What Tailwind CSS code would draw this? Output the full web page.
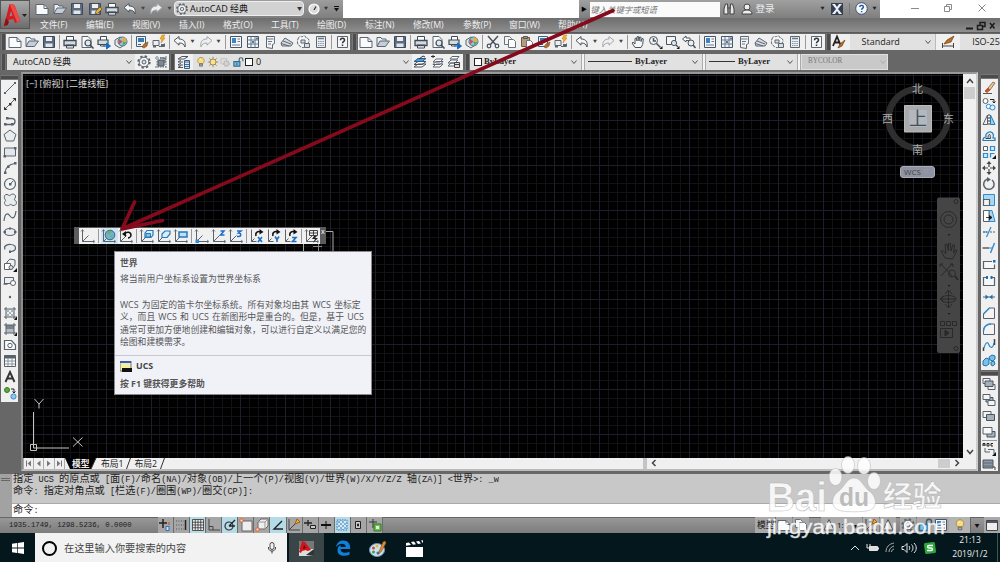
<!DOCTYPE html>
<html lang="zh-CN">
<head>
  <meta charset="UTF-8">
  <meta name="viewport" content="width=device-width, initial-scale=1.0">
  <title>AutoCAD 经典</title>
  <script src="https://cdn.jsdelivr.net/npm/@tailwindcss/browser@4"></script>
</head>
<body class="w-[1000px] h-[562px] overflow-hidden bg-[#676767] font-['Open_Sans','Noto_Sans_CJK_SC',sans-serif] text-[9px] leading-none text-[#222] whitespace-nowrap">

  <!-- Iconos -->
  <svg class="hidden" fill="none">
    <symbol id="new" viewBox="0 0 16 16"><path d="M2 3.500h8l4 4v6H2z" fill="#fafbfc" stroke="#5b6672"/><path d="M10 3.500v4h4" stroke="#5b6672"/></symbol>
    <symbol id="open" viewBox="0 0 16 16"><path d="M2 12V3.500h4l1 1.500h4v2" fill="#eef1f4" stroke="#5b6672"/><path d="M2 12.500 5 7h9.500l-4 5.500z" fill="#c5ced8" stroke="#5b6672"/></symbol>
    <symbol id="save" viewBox="0 0 16 16"><path d="M2.500 2.500h11v11h-11z" fill="#5c6c80" stroke="#3e4a58"/><path d="M5 3h6v4H5z" fill="#eee"/><path d="M4.500 9.500h7V13h-7z" fill="#dfe5ea"/></symbol>
    <symbol id="saveas" viewBox="0 0 16 16"><use href="#save"/><path d="m8 13 1-3 4-4 2 2-4 4z" fill="#e8b23c" stroke="#7a4a10" stroke-width=".7"/></symbol>
    <symbol id="print" viewBox="0 0 16 16"><path d="M4.500 6V2.500h7V6M4.500 11v3h7v-3" fill="#fff" stroke="#414b56"/><path d="M2 6.500h12v5H2z" fill="#d4dade" stroke="#414b56" stroke-width="1.300"/><path d="M4 11h8" stroke="#414b56"/></symbol>
    <symbol id="preview" viewBox="0 0 16 16"><path d="M3 2.500h6l3 3v8H3z" fill="#fafafa" stroke="#5b6672"/><circle cx="9" cy="9" r="3" fill="#dfe8ee" stroke="#414b56" stroke-width="1.200"/><path d="m11 11 3.500 3.500" stroke="#414b56" stroke-width="1.600"/></symbol>
    <symbol id="publish" viewBox="0 0 16 16"><path d="M4.500 6V2.500h6V6M4.500 10v2h5" fill="#fff" stroke="#414b56"/><path d="M2 6h10v4.500H2z" fill="#d4dade" stroke="#414b56" stroke-width="1.200"/><path d="M7 12h5M10.500 9l4 3-4 3z" fill="#176dc1" stroke="#176dc1"/></symbol>
    <symbol id="globe" viewBox="0 0 16 16"><path d="m2 6 5-3 4 2v6l-4 3-5-3z" fill="#e7e7e7" stroke="#5b6672"/><circle cx="9.500" cy="7.500" r="4.500" fill="#8fc3d8" stroke="#4a7284"/><path d="M9.500 7.500V3.200a4.500 4.500 0 0 1 4.300 4.300z" fill="#e9a94c"/><path d="M9.500 7.500 6 10.500V5z" fill="#cf5548"/><path d="m9.500 7.500 4 1-3 3z" fill="#58a758"/></symbol>
    <symbol id="match" viewBox="0 0 16 16"><path d="M2.500 2.500h9v10h-9z" fill="#eef2f5" stroke="#3b6186"/><path d="M4 4h6v4H4z" fill="#3e78aa"/><path d="M4 10.500h3" stroke="#555"/><path d="m8 13 2-3 4-2-1 4-3 2z" fill="#b96f28" stroke="#7a4515" stroke-width=".6"/></symbol>
    <symbol id="block" viewBox="0 0 16 16"><path d="M2 6.500h6v5H2zM8 12.500h5.500v-3" stroke="#5b6672" fill="#eee"/><path d="M2 12.500h3M10 11h3" stroke="#5b6672" stroke-width="2"/><path d="m11 1-2 4h2l-1 4 4-5h-2l2-3z" fill="#f2b331" stroke="#c07b10" stroke-width=".5"/></symbol>
    <symbol id="undo" viewBox="0 0 16 16"><path d="m2 6.500 5-4V5c5 0 7 3 6 8-1-3-2.500-4-6-4v2.200z" fill="#f6f6f6" stroke="#4b545e"/></symbol>
    <symbol id="redo" viewBox="0 0 16 16"><path d="m14 6.500-5-4V5c-5 0-7 3-6 8 1-3 2.500-4 6-4v2.200z" fill="#eee" stroke="#a3a8ad"/></symbol>
    <symbol id="props" viewBox="0 0 16 16"><path d="M2.500 2.500h11v11h-11z" fill="#f4f6f8" stroke="#44566a"/><path d="M4 4h4v5H4z" fill="#3e84c0"/><path d="M9.500 5H12M9.500 7.500H12M4 11h8" stroke="#778"/></symbol>
    <symbol id="design" viewBox="0 0 16 16"><path d="M2.500 2.500h11v11h-11z" fill="#f4f6f8" stroke="#44566a"/><path d="M6 2.500v11M10 2.500v11M2.500 6h11M2.500 10h11" stroke="#66788a"/><path d="M7 7h2v2H7zM11 3.500h2v2h-2z" fill="#5a7894"/></symbol>
    <symbol id="palette" viewBox="0 0 16 16"><path d="M4.500 2.500h8v7l-2 1v4l-6-1z" fill="#f4f4f4" stroke="#5b6672"/><path d="M4.500 5h7M6 7.500h4M6 10h3M12.500 3v6" stroke="#66788a"/></symbol>
    <symbol id="sheet" viewBox="0 0 16 16"><path d="m2 9 4-5 8 5-2 3H3z" fill="#d8dce0" stroke="#5b6672"/><path d="m4 7 8 3M2.500 9.500 10 12" stroke="#5b6672"/></symbol>
    <symbol id="markup" viewBox="0 0 16 16"><path d="M2 5c1-3 3-3 4-2 2-2 4-1 4 1 3 0 4 3 2 5 1 3-1 4-3 4-2 1-4 1-5-1-3-1-3-5-2-7z" fill="#f4f4f4" stroke="#5b6672" stroke-dasharray="3 1"/><path d="M5 6h4v3H5zM8.500 9.500h5v4h-5z" fill="#d8dde2" stroke="#5b6672"/></symbol>
    <symbol id="calc" viewBox="0 0 16 16"><path d="M3.500 2.500h9v11h-9z" fill="#eceef0" stroke="#5b6672"/><path d="M5 7.500h6M5 9.500h6M5 11.500h6" stroke="#8a96a2" stroke-dasharray="1.500 .700"/><path d="M5 4.500h6" stroke="#66788a" stroke-width="1.500"/></symbol>
    <symbol id="help" viewBox="0 0 16 16"><path d="M3.500 2.500h10v11h-10z" fill="#f6f6f6" stroke="#5b6672"/><path d="M6.500 6.200c0-2.500 4-2.500 4 0 0 1.500-2 1.300-2 3M8.500 10.500v1.500" stroke="#333" stroke-width="1.500"/></symbol>
    <symbol id="cut" viewBox="0 0 16 16"><path d="m3 2 8 9M13 2l-8 9" stroke="#4b545e" stroke-width="1.500"/><circle cx="4" cy="12" r="1.800" stroke="#4b545e" stroke-width="1.200"/><circle cx="12" cy="12" r="1.800" stroke="#4b545e" stroke-width="1.200"/></symbol>
    <symbol id="copy" viewBox="0 0 16 16"><path d="M2.500 2.500h5l2 2v6h-7z" fill="#f4f4f4" stroke="#68727c"/><path d="M6.500 5.500h5l2 2v6h-7z" fill="#fff" stroke="#68727c"/></symbol>
    <symbol id="paste" viewBox="0 0 16 16"><path d="M2.500 3.500h8v9h-8z" fill="#b69b78" stroke="#6b5b48"/><path d="M4.500 2.500h4v2h-4z" fill="#999" stroke="#555"/><path d="M7.500 6.500h4l2 2v5h-6z" fill="#fff" stroke="#68727c"/></symbol>
    <symbol id="pan" viewBox="0 0 16 16"><path d="M5 13.500 2 9l1-.8L5 10V4.500l1.300-.5.700 3V2.800L8.400 2.500 9 7l.6-4 1.400.3L11 7.500l1-3 1.300.4-.6 5.600-1.700 3z" fill="#f6f6f6" stroke="#4b545e"/></symbol>
    <symbol id="zoom" viewBox="0 0 16 16"><circle cx="6.500" cy="6.500" r="4" fill="#eef3f6" stroke="#4b545e"/><path d="M6.500 4v3H9M9.500 9.500l4 4" stroke="#4b545e" stroke-width="1.500"/><path d="m15.500 12-3 3h3z" fill="#111"/></symbol>
    <symbol id="zwin" viewBox="0 0 16 16"><path d="M2.500 2.500h9v8h-9z" stroke="#4b545e" fill="#f4f4f4"/><circle cx="10" cy="9" r="2.600" fill="#dde6ea" stroke="#4b545e"/><path d="m12 11 2 2" stroke="#4b545e" stroke-width="1.500"/><path d="m15.500 12-3 3h3z" fill="#111"/></symbol>
    <symbol id="zprev" viewBox="0 0 16 16"><path d="m1.500 5 3.500-3v2h4v2.500H5V8z" fill="#fff" stroke="#4b545e"/><circle cx="10" cy="9" r="3" fill="#e8eef2" stroke="#4b545e"/><path d="m12 11 2.500 3" stroke="#4b545e" stroke-width="1.600"/></symbol>
    <symbol id="gear" viewBox="0 0 16 16"><circle cx="8" cy="8" r="5.700" stroke="#5a636c" stroke-width="2" stroke-dasharray="2.300 2.177"/><circle cx="8" cy="8" r="4.800" fill="#f4f4f4" stroke="#5a636c"/><circle cx="8" cy="8" r="2" fill="#ddd" stroke="#5a636c"/></symbol>
    <symbol id="wsave" viewBox="0 0 16 16"><path d="M2 4h12M2 13h12M4 2v12M13 2v12" stroke="#66707a" stroke-dasharray="1.500 1"/><path d="M5 6h6v6H5z" fill="#7c8894" stroke="#46525e"/><path d="M7 4h5v5" stroke="#46525e"/></symbol>
    <symbol id="layers" viewBox="0 0 16 16"><path d="m2 5 4-2.500h6L8 5zM2 8l3-2M2 11l3-2M2 13.500l3-2M2 8h5M2 11h5M2 13.500h5" fill="#fff" stroke="#4b545e"/><path d="M8.500 6.500h5v8h-5z" fill="#dce8f2" stroke="#3b5a7a"/><path d="M9 8h4M9 10.500h4M9 12.500h4" stroke="#3b6d9a"/></symbol>
    <symbol id="lay1" viewBox="0 0 16 16"><path d="m2 13 4-3h8l-4 3zM2 10.500l4-3h8l-4 3z" fill="#fff" stroke="#4b545e"/><path d="m2 7.500 4-3h8l-4 3z" fill="#4d9ad4" stroke="#2a5f8d"/><path d="m7 5 4-3 2 1" stroke="#333"/></symbol>
    <symbol id="lay2" viewBox="0 0 16 16"><path d="m4 13 3-3h7l-3 3zM4 10.500l3-3h7l-3 3zM4 8l3-3h7l-3 3z" fill="#fff" stroke="#5b6672"/><path d="M6 2.500H2M4 1v3" stroke="#333"/></symbol>
    <symbol id="lay3" viewBox="0 0 16 16"><path d="m2 12 3-3h7l-3 3zM2 9l3-3h7L9 9zM4 5l2-2.500h7L11 5z" fill="#fff" stroke="#5b6672"/><path d="M8.500 8.500h5v5h-5z" fill="#ddd" stroke="#444"/><path d="M9 10.500h4" stroke="#444"/></symbol>
    <symbol id="bulb" viewBox="0 0 16 16"><path d="M5.500 10C2 7 4 2 8 2s6 5 2.500 8z" fill="#f8dc83" stroke="#a58236"/><path d="M6 10.500h4v3H6z" fill="#aaa" stroke="#666"/><path d="M6.500 5 8 4" stroke="#fff"/></symbol>
    <symbol id="sun" viewBox="0 0 16 16"><path d="M8 1v14M1 8h14M3 3l10 10M13 3 3 13" stroke="#8a7a48"/><circle cx="8" cy="8" r="4" fill="#fbe28a" stroke="#8a7440"/></symbol>
    <symbol id="vpfreeze" viewBox="0 0 16 16"><path d="M2.500 3.500h8v7h-8z" fill="#ddd" stroke="#bbb"/><circle cx="10" cy="10" r="3.500" fill="#d2d2d2" stroke="#b4b4b4" stroke-width="2" stroke-dasharray="2 1"/></symbol>
    <symbol id="lock" viewBox="0 0 16 16"><path d="M9.500 8V4.500c0-3 5-3 5 0V7" stroke="#4a5a66" stroke-width="1.500"/><path d="M2.500 7.500h8v6h-8z" fill="#7fc0e4" stroke="#2d6e96" stroke-width="1.500"/><path d="M6.500 9v3" stroke="#234"/></symbol>
    <symbol id="tstyle" viewBox="0 0 16 16"><path d="m2 12 4-9.500L10 12M3.500 8.500h5" stroke="#222" stroke-width="1.800"/><path d="m7 14 2-4 5-4-3 6z" fill="#b96f28" stroke="#6d3c10" stroke-width=".7"/></symbol>
    <symbol id="dstyle" viewBox="0 0 16 16"><path d="M2.500 9v5M13.500 9v5M3 12h10" stroke="#444"/><path d="m4 10 3-4 7-4-3 6z" fill="#b96f28" stroke="#6d3c10" stroke-width=".7"/></symbol>

    <symbol id="line" viewBox="0 0 16 16"><path d="M3 13 13 3" stroke="#59626b"/><path d="M2 12h2v2H2zM12 2h2v2h-2z" fill="#59626b"/></symbol>
    <symbol id="xline" viewBox="0 0 16 16"><path d="M3 13 13 3" stroke="#59626b"/><path d="M7 7h2.500v2.500H7z" fill="#333"/><path d="M2 14v-3.500L5.500 14zM14 2v3.500L10.500 2z" fill="#333"/></symbol>
    <symbol id="pline" viewBox="0 0 16 16"><path d="M3 12.500h7c4 0 4-6 0-6H6" stroke="#59626b" stroke-width="1.300"/><path d="M2 11h2.500v2.500H2zM9 11h2.500v2.500H9zM4 5h2.500v2.500H4z" fill="#59626b"/></symbol>
    <symbol id="polygon" viewBox="0 0 16 16"><path d="m8 2 6 4.500L11.700 13H4.300L2 6.500z" fill="#e9ecef" stroke="#59626b"/></symbol>
    <symbol id="rect" viewBox="0 0 16 16"><path d="M2.500 4h11v8h-11z" fill="#e3e7eb" stroke="#59626b"/><path d="M1.500 11h2.500v2.500H1.500zM12 3h2.500v2.500H12z" fill="#59626b"/></symbol>
    <symbol id="arc" viewBox="0 0 16 16"><path d="M3 13c0-5 4-9 10-9.500" stroke="#59626b" stroke-width="1.200"/><path d="M2 11.500h2.500V14H2zM5 5.500h2.500V8H5zM12 2h2.500v2.500H12z" fill="#59626b"/></symbol>
    <symbol id="circle" viewBox="0 0 16 16"><circle cx="8" cy="8" r="5.500" fill="#f2f3f4" stroke="#59626b" stroke-width="1.200"/><path d="M8 8.500 11 5" stroke="#59626b"/><path d="M7 7h2.500v2.500H7z" fill="#59626b"/></symbol>
    <symbol id="cloud" viewBox="0 0 16 16"><path d="M8 3.500c2-2.500 6-1.500 5.500 1.500-.3 1.500-1.500 2-1 3 3 1 2.500 6-1.500 5.500-1.500-.3-2-1.500-3-1-1.500 2-6 1.500-5.500-2 .3-1.500 1.500-1.500 1-2.500C1.500 6 2 2 5 2.500c1.500.2 2 1.500 3 1z" fill="#e9ecef" stroke="#59626b"/></symbol>
    <symbol id="spline" viewBox="0 0 16 16"><path d="M2 13C3 4 6 5 8 8s5 3 6-5" stroke="#59626b" stroke-width="1.200"/></symbol>
    <symbol id="ellipse" viewBox="0 0 16 16"><ellipse cx="8" cy="8" rx="5.500" ry="3.500" fill="#eceef0" stroke="#59626b" stroke-width="1.200"/><path d="M1.500 7H4v2H1.500zM12 7h2.500v2H12zM7 3.500h2v2H7z" fill="#59626b"/></symbol>
    <symbol id="earc" viewBox="0 0 16 16"><path d="M3 9.500C1 5 7 4 9 4.500c6 .500 6 6.500 0 7" fill="#e9ecef" stroke="#59626b" stroke-width="1.200"/><path d="M7 10.500h2V13H7z" fill="#59626b"/></symbol>
    <symbol id="insert" viewBox="0 0 16 16"><path d="m5 5 3-3 5 1v5l-2 3H5z" fill="#f0f0f0" stroke="#59626b"/><path d="M2.500 6.500h6v6h-6z" fill="#fff" stroke="#59626b"/><circle cx="9" cy="10.500" r="2" fill="#ddd" stroke="#59626b"/><path d="m15 11-4 4h4z" fill="#111"/></symbol>
    <symbol id="mkblock" viewBox="0 0 16 16"><path d="M2.500 4.500h9v6h-9z" fill="#eceef0" stroke="#59626b"/><circle cx="11" cy="10" r="2.500" fill="#fff" stroke="#59626b"/><path d="M1.500 11h4" stroke="#59626b" stroke-width="1.500"/></symbol>
    <symbol id="point" viewBox="0 0 16 16"><circle cx="8" cy="8" r="1.200" fill="#59626b"/></symbol>
    <symbol id="hatch" viewBox="0 0 16 16"><path d="M4 2v12M12 2v12M2 4h12M2 12h12" stroke="#59626b"/><path d="m4 8 4-4M4 12l8-8M8 12l4-4M4 4l8 8M4 8l4 4M8 4l4 4" stroke="#8b949d" stroke-width=".700"/><path d="m15 11-3 4h3z" fill="#111"/></symbol>
    <symbol id="grad" viewBox="0 0 16 16"><path d="M4 4h8v8H4z" fill="#b4bbc2"/><path d="M4 4h8v4H4z" fill="#78838e"/><path d="M4 2v12M12 2v12M2 4h12M2 12h12" stroke="#59626b"/><path d="m15 11-3 4h3z" fill="#111"/></symbol>
    <symbol id="region" viewBox="0 0 16 16"><path d="M2.500 3.500h7l4 4.500v4.500h-11z" fill="#fafafa" stroke="#59626b" stroke-width="1.200"/><circle cx="8" cy="8.500" r="2.200" stroke="#59626b"/></symbol>
    <symbol id="table" viewBox="0 0 16 16"><path d="M2.500 2.500h11v11h-11z" fill="#fff" stroke="#59626b"/><path d="M2.500 4h11" stroke="#59626b" stroke-width="3"/><path d="M6 5v8M10 5v8M3 8h10M3 11h10" stroke="#89929b"/></symbol>
    <symbol id="mtext" viewBox="0 0 16 16"><path d="M3.500 13 8 3l4.500 10M5 9.500h6" stroke="#333" stroke-width="1.900"/></symbol>
    <symbol id="addsel" viewBox="0 0 16 16"><circle cx="5" cy="5" r="2.500" fill="#5aab3e" stroke="#377a20"/><circle cx="11.500" cy="11.500" r="2.600" fill="#8cc8f0" stroke="#3c8cc8"/><path d="M9 4h3v4M10.500 6.500 12 8l1.500-1.500" stroke="#222"/></symbol>

    <symbol id="erase" viewBox="0 0 16 16"><path d="M2 13.500h9" stroke="#555"/><path d="m4 11 3-3 2 2-3 2.500z" fill="#d8501c" stroke="#8d2c08" stroke-width=".6"/><path d="m7 8 5-6 2 1-5 7z" fill="#eac79b" stroke="#805a38" stroke-width=".8"/></symbol>
    <symbol id="cp" viewBox="0 0 16 16"><circle cx="4.500" cy="5" r="2.500" fill="#fff" stroke="#59626b"/><circle cx="7.500" cy="10.500" r="2.200" fill="#fff" stroke="#2f8bcf"/><circle cx="11.500" cy="11.500" r="2.500" fill="#dff0fb" stroke="#2f8bcf"/><path d="M9 3.500h4V7M11.500 5.500 13 7l1.500-1.500" stroke="#222"/></symbol>
    <symbol id="mirror" viewBox="0 0 16 16"><path d="M6.500 3v9.500H2z" fill="#eee" stroke="#59626b"/><path d="M9.500 3v9.500H14z" fill="#9bd0f0" stroke="#2a7ab5"/><path d="M8 2v12" stroke="#333" stroke-dasharray="2 1"/></symbol>
    <symbol id="offset" viewBox="0 0 16 16"><path d="M2 12.500h12V10h-2c1.500-4-1-7-4-6S4.500 7 5 9c-2 0-3 1-3 3.500z" fill="#d9edf9" stroke="#2a78b4" stroke-width="1.200"/><path d="M4.500 10.500h5C9 8 9.500 6.500 8.500 6.500S7 8 7 10" stroke="#444"/></symbol>
    <symbol id="array" viewBox="0 0 16 16"><path d="M2.500 2.500h4v4h-4z" fill="#fff" stroke="#59626b"/><path d="M9.500 2.500h4v4h-4zM2.500 9.500h4v4h-4zM9.500 13.500v-4h4" fill="#d9edf9" stroke="#2f8bcf" stroke-width="1.200"/><path d="m15 11-4 4h4z" fill="#111"/></symbol>
    <symbol id="move" viewBox="0 0 16 16"><path d="M8 3v10M3 8h10" stroke="#444" stroke-width="1.200" stroke-dasharray="4 2"/><path d="m8 1 2.500 3h-5zM8 15l2.500-3h-5zM1 8l3-2.500v5zM15 8l-3-2.500v5z" fill="#444"/></symbol>
    <symbol id="rotate" viewBox="0 0 16 16"><path d="M6 3.300A5.200 5.200 0 1 0 11 4" stroke="#59626b" stroke-width="1.500"/><path d="m6 1 4 2.500L6 6z" fill="#59626b"/></symbol>
    <symbol id="scale" viewBox="0 0 16 16"><path d="M2.500 2.500h11v11h-11z" fill="#a9d7f2" stroke="#2f8bcf"/><path d="M2.500 7.500h6v6h-6z" fill="#f4f4f4" stroke="#59626b" stroke-width="1.200"/></symbol>
    <symbol id="stretch" viewBox="0 0 16 16"><path d="M8 2.500h3l3 11H8z" fill="#a9d7f2" stroke="#2f8bcf"/><path d="M2.500 2.500H8v11H2.500z" fill="#fff" stroke="#59626b"/><path d="M5 9.500h4M8.500 7.500l2.500 2-2.500 2z" fill="#111" stroke="#111" stroke-width=".8"/></symbol>
    <symbol id="trim" viewBox="0 0 16 16"><path d="M2 8h5M5.500 13 10 3" stroke="#2f8bcf" stroke-width="1.200"/><path d="M2 8h4M9 8h5" stroke="#59626b" stroke-dasharray="2 1"/></symbol>
    <symbol id="extend" viewBox="0 0 16 16"><path d="m9.500 13 4-10" stroke="#2f8bcf" stroke-width="1.400"/><path d="M1.500 8H8" stroke="#444" stroke-width="1.300"/><path d="M8 8h3" stroke="#2f8bcf"/></symbol>
    <symbol id="break1" viewBox="0 0 16 16"><path d="M11 4.500H2.500v7h11v-4" fill="#f8f8f8" stroke="#59626b" stroke-width="1.200"/><path d="M12 3h2.500v2.500H12z" fill="#1b6fb8"/></symbol>
    <symbol id="break2" viewBox="0 0 16 16"><path d="M5 4.500H2.500v8h11v-8H11" fill="#f8f8f8" stroke="#59626b" stroke-width="1.200"/><path d="M5 3h2v3H5zM9.500 3h2v3h-2z" fill="#1b6fb8"/></symbol>
    <symbol id="join" viewBox="0 0 16 16"><path d="M2 8h12" stroke="#59626b"/><path d="m4.500 5.500 3 2.500-3 2.500zM11.500 5.500 8.500 8l3 2.500z" fill="#1b6fb8"/></symbol>
    <symbol id="chamfer" viewBox="0 0 16 16"><path d="M8 3h5.500v10.500h-11V9z" fill="#f4f4f4" stroke="#59626b"/><path d="m2.500 9 6-6" stroke="#2f8bcf" stroke-width="1.500"/></symbol>
    <symbol id="fillet" viewBox="0 0 16 16"><path d="M10 3h3.500v10.500h-11V10c0-4 3-7 7.500-7z" fill="#f4f4f4" stroke="#59626b"/><path d="M2.500 10c0-4 3-7 7.500-7" stroke="#2f8bcf" stroke-width="1.500"/></symbol>
    <symbol id="blend" viewBox="0 0 16 16"><path d="M3 11c2-7 4-6 5-3s4 4 5-2" stroke="#2f8bcf" stroke-width="1.300"/><path d="M2.500 14v-3.500M13.500 2v6" stroke="#444" stroke-width="1.500"/></symbol>
    <symbol id="explode" viewBox="0 0 16 16"><path d="m2 8 3-3 3 1v5l-3 2-3-1zM8 4l3-2 3 1v3l-2 2-3-1zM10 9l3-1 1 3-2 2-2-1z" fill="#7cc0ea" stroke="#1f74ae"/></symbol>
    <symbol id="do1" viewBox="0 0 16 16"><path d="M2 2.500h7v5H2zM7 8.500h7v5H7z" fill="#f4f4f4" stroke="#59626b"/><path d="M4 5h8v5.500H4z" fill="#a6b0b9" stroke="#4a545e"/></symbol>
    <symbol id="do2" viewBox="0 0 16 16"><path d="M5 5.500h7V10H5z" fill="#a6b0b9" stroke="#4a545e"/><path d="M2 2.500h7v5H2zM7 8.500h7v5H7z" fill="#f4f4f4" stroke="#59626b"/></symbol>
    <symbol id="do3" viewBox="0 0 16 16"><path d="M2 3.500h8v6H2z" fill="#f4f4f4" stroke="#59626b"/><path d="M5.500 6.500h8v6h-8z" fill="#a6b0b9" stroke="#4a545e"/></symbol>
    <symbol id="do4" viewBox="0 0 16 16"><path d="M6 7.500h8v5.500H6z" fill="#a6b0b9" stroke="#4a545e"/><path d="M2 3.500h9v6.500H2z" fill="#f8f8f8" stroke="#59626b"/></symbol>
    <symbol id="abc" viewBox="0 0 16 16"><path d="M2 5V2.500h2V5M2 4h2M6 2.500h2V5H6zM12 2.500h-2V5h2" stroke="#222"/><path d="M4 7v4h5M7 8.500h6V13" stroke="#59626b"/><path d="m15 11-4 4h4z" fill="#111"/></symbol>
    <symbol id="hback" viewBox="0 0 16 16"><path d="M2 3h10v8H2z" fill="#8b98a4" stroke="#4a545e"/><path d="M2 6h10M2 9h10" stroke="#5c6874"/><path d="M12 10h2v3" stroke="#444"/></symbol>

    <!-- UCS -->
    <symbol id="ucs" viewBox="0 0 16 16"><path d="M2.500 2v11.500h11.500M2.500 13.500l6-6" stroke="#5b6268"/><path d="m13 12 2 1.500-2 1.500M1 3.500 2.500 1.500 4 3.500" stroke="#5b6268" stroke-width=".7"/></symbol>
    <symbol id="uworld" viewBox="0 0 16 16"><use href="#ucs"/><circle cx="9" cy="7" r="4.800" fill="#6fb3d3" stroke="#3a6274"/><path d="M6 4c2-2 4-1 5 0L9 6 7 7zM9 8l3-1-1 3z" fill="#6fae72"/></symbol>
    <symbol id="uprev" viewBox="0 0 16 16"><use href="#ucs"/><path d="M6 6c3-3 7-2 7 1 0 2-2 3-3 3" stroke="#111" stroke-width="1.500"/><path d="m8 3-4 3 4 3z" fill="#111"/></symbol>
    <symbol id="uface" viewBox="0 0 16 16"><use href="#ucs"/><path d="m6 5 2-2.500h6V7l-2 2.500H6z" fill="#d9eefa" stroke="#2478b8" stroke-width="1.200"/><path d="M7 5.500h4.500V9H7z" fill="#8cc4e8" stroke="#2478b8"/></symbol>
    <symbol id="uobj" viewBox="0 0 16 16"><use href="#ucs"/><path d="m6 6 3-3h5v3l-3 3.500H6z" fill="#d9eefa" stroke="#2478b8" stroke-width="1.200"/></symbol>
    <symbol id="uview" viewBox="0 0 16 16"><use href="#ucs"/><path d="M6 4h8v5H6z" fill="#bfe0f5" stroke="#2478b8" stroke-width="1.500"/></symbol>
    <symbol id="uorg" viewBox="0 0 16 16"><use href="#ucs"/><path d="M1.500 11.500H5V15H1.500z" fill="#2f8bdf"/></symbol>
    <symbol id="uz" viewBox="0 0 16 16"><use href="#ucs"/><path d="M9.500 3H13L9.500 7H13.500" stroke="#1b6fc8" stroke-width="1.500"/></symbol>
    <symbol id="u3" viewBox="0 0 16 16"><use href="#ucs"/><path d="M9 3h4l-2.500 2c3 0 3 3.500 0 3.500H9" stroke="#1b6fc8" stroke-width="1.500"/></symbol>
    <symbol id="uturn" viewBox="0 0 16 16"><path d="M2.500 1.500v12h5M2.500 13.500l3-3" stroke="#5b6268"/><path d="M7 8c-1-4 2-5 5-4" stroke="#111" stroke-width="1.500"/><path d="m10.500 1 4 3-4 2.500z" fill="#111"/></symbol>
    <symbol id="urx" viewBox="0 0 16 16"><use href="#uturn"/><path d="m9 9 4 5M13 9l-4 5" stroke="#1b6fc8" stroke-width="1.600"/></symbol>
    <symbol id="ury" viewBox="0 0 16 16"><use href="#uturn"/><path d="m9 8.500 2 3 2-3M11 11.500V14" stroke="#1b6fc8" stroke-width="1.600"/></symbol>
    <symbol id="urz" viewBox="0 0 16 16"><use href="#uturn"/><path d="M9 9.500h4L9.500 13.500H13.500" stroke="#1b6fc8" stroke-width="1.600"/></symbol>
    <symbol id="uapply" viewBox="0 0 16 16"><use href="#ucs"/><path d="M5.500 2.500h8v5h-8zM9.500 2.500v5M5.500 5h8" stroke="#444"/><path d="m10 8-2 3h3l-2 4 5-5h-3l2-2z" fill="#222"/></symbol>

    <!-- Barra de estado -->
    <symbol id="s1" viewBox="0 0 16 16"><path d="M2 6h8M6 2v9" stroke="#222" stroke-width="1.500"/><path d="M9 9.500h3v4H9z" stroke="#2a72b8" fill="#cfe4f5"/><path d="M12 5v3" stroke="#d04020"/></symbol>
    <symbol id="s2" viewBox="0 0 16 16"><path d="M3 4h8M3 8h8M3 12h8" stroke="#555" stroke-dasharray="1 1.500"/><path d="M12.500 3v10" stroke="#222" stroke-width="1.500"/></symbol>
    <symbol id="s3" viewBox="0 0 16 16"><path d="M2.500 2.500h11v11h-11zM5.250 2.500v11M8 2.500v11M10.750 2.500v11M2.500 5.250h11M2.500 8h11M2.500 10.750h11" stroke="#333" stroke-width=".8" fill="#eee"/></symbol>
    <symbol id="s4" viewBox="0 0 16 16"><path d="M3 2v11h11M3 9.500h4V13" stroke="#444"/></symbol>
    <symbol id="s5" viewBox="0 0 16 16"><circle cx="7" cy="9" r="4" stroke="#333" stroke-width="1.200"/><path d="m7 9 6-6M7 9h6" stroke="#222" stroke-width="1.300"/></symbol>
    <symbol id="s6" viewBox="0 0 16 16"><path d="M4 4h10v10H4z" fill="#eee" stroke="#666"/><path d="M2 2h3v3H2z" fill="#fbe4dc" stroke="#e06a30"/></symbol>
    <symbol id="s7" viewBox="0 0 16 16"><path d="m4 5 3-3h7v7l-3 3H4z" fill="#eee" stroke="#666"/><path d="M11 5v7M4 5h7l3-3" stroke="#999"/><path d="M2 11h3v3H2z" fill="#fbe4dc" stroke="#e06a30"/></symbol>
    <symbol id="s8" viewBox="0 0 16 16"><path d="M12 4 4 12h9" stroke="#222" stroke-width="1.400"/></symbol>
    <symbol id="s9" viewBox="0 0 16 16"><path d="M3 2v11h11M3 13l6-6" stroke="#444"/><path d="m9 7 2-5 3 3z" fill="#f2b331" stroke="#a05a10"/></symbol>
    <symbol id="s10" viewBox="0 0 16 16"><path d="M2 6h8M6 3v6" stroke="#222" stroke-width="1.300"/><path d="M8.500 8.500h5v3h-5z" stroke="#222" fill="#ccc"/></symbol>
    <symbol id="s11" viewBox="0 0 16 16"><path d="M3 8h10" stroke="#111" stroke-width="2"/><path d="M8 4v8" stroke="#111"/></symbol>
    <symbol id="s12" viewBox="0 0 16 16"><path d="M3 3h10v10H3z" fill="#d6e9f8" stroke="#3a78b4" stroke-dasharray="1.500 1"/><path d="m3 7 4-4M3 11l8-8M5 13l8-8M9 13l4-4M3 3l10 10M7 3l6 6M3 7l6 6" stroke="#5c98cc" stroke-width=".7"/></symbol>
    <symbol id="s13" viewBox="0 0 16 16"><path d="M5.500 4.500h5v7h-5z" fill="#ccc" stroke="#222"/><path d="M7.500 7h1v2h-1z" stroke="#222"/></symbol>
    <symbol id="s14" viewBox="0 0 16 16"><path d="M2 5h8M6 2v9" stroke="#333"/><path d="M7 7h7v7H7z" fill="#6fbf4c" stroke="#2f7a1e"/><path d="M9 9h3v3H9z" fill="#eee"/></symbol>
    <symbol id="win" viewBox="0 0 16 16"><path d="M2.500 3.500h11v10h-11z" fill="#eee" stroke="#444"/><path d="M3 5h10" stroke="#556" stroke-width="2"/></symbol>
    <symbol id="tri" viewBox="0 0 16 16"><path d="M8 2.500 13 13H3z" fill="#ddd" stroke="#555"/></symbol>
  </svg>

  <div class="relative flex flex-col w-[1000px] h-[562px]">

    <!-- Barra de título -->
    <header class="flex h-[17.500px] shrink-0 bg-white">
      <div class="flex items-center w-[343px] pl-[33.500px] bg-linear-to-b from-[#9d9d9d] to-[#7f7f7f]" data-icons="new open save saveas print undo v redo v">
        <div class="flex items-center order-last w-[130px] h-[15px] shrink-0 bg-[#d2d2d2] border border-[#eee] rounded-sm text-[#111]">
          <svg class="size-3.5 shrink-0" fill="none"><use href="#gear"/></svg>
          <span class="flex-1 ml-px">AutoCAD 经典</span><span class="text-[5px] text-[#333] pr-px">▼</span>
        </div>
        <div class="flex items-center order-last pl-1 gap-1 text-[4px] text-[#333]">
          <svg class="size-3" viewBox="0 0 12 12" fill="none"><circle cx="6" cy="6" r="5" fill="#ddd" stroke="#fff" stroke-width="1.200"/><path d="m6 7 2-3.500" stroke="#333" stroke-width="1.300"/></svg>
          <span>▼</span>
          <svg class="w-[5px] h-[6px] ml-0.5" viewBox="0 0 5 6"><path d="M0 0h5v1H0zM0 2h5L2.500 5.500z" fill="#111"/></svg>
        </div>
      </div>
      <div class="w-[235.500px]"></div>
      <div class="flex items-center w-[301.500px] bg-linear-to-b from-[#a0a0a0] to-[#7f7f7f]">
        <span class="w-[11px] text-center text-[6px] text-black">▶</span>
        <div class="w-[130px] h-[15px] mt-px bg-[#fafafa] pl-px italic text-[8.300px] leading-4 text-[#777]">键入关键字或短语</div>
        <svg class="w-3 h-3.5 ml-[3px]" viewBox="0 0 12 14" fill="none"><path d="M1 7 2.500 2h2L5 12H1zM11 7 9.500 2h-2L7 12h4zM5 6h2" fill="#e8e8e8" stroke="#444"/></svg>
        <svg class="size-3 ml-1.5" viewBox="0 0 12 12"><circle cx="6" cy="4" r="3" fill="#eee" stroke="#444"/><path d="M1 11c0-3 2-4 5-4s5 1 5 4z" fill="#eee" stroke="#444"/></svg>
        <span class="ml-[3px] text-[9.500px] text-[#eee]">登录</span>
        <span class="ml-[46px] text-[4px]">▼</span>
        <svg class="w-3 h-3 ml-1.5" viewBox="0 0 12 12"><path d="M0 0h12v12H0z" fill="#333f4c"/><path d="m1 1 4 5-4 5h3l2-3 2 3h3L7 6l4-5H8L6 4 4 1z" fill="#eef"/></svg>
        <span class="w-px h-3 ml-1.5 bg-[#777]"></span>
        <svg class="size-[13px] ml-[5px]" viewBox="0 0 13 13" fill="none"><circle cx="6.500" cy="6.500" r="5.800" fill="#f4f7fa" stroke="#3b5874"/><path d="M4.800 5c0-2.200 3.600-2.200 3.600 0 0 1.400-1.800 1.300-1.800 2.700M6.600 9v1.300" stroke="#1c4f9c" stroke-width="1.400"/></svg>
        <span class="ml-[5px] text-[4px]">▼</span>
      </div>
      <svg class="w-[120px] h-[17px]" viewBox="0 0 120 17" fill="none" stroke="#8a8a8a"><path d="M31 8.500h8M64.500 6.500h5v5h-5zM66.500 6V4.500h5v5H70M98.500 4.500l7 7M105.500 4.500l-7 7"/></svg>
    </header>

    <!-- Menú -->
    <nav class="flex items-center h-[15.500px] shrink-0 pt-0.5 pl-10 bg-linear-to-b from-[#6e6e6e] to-[#8e8e8e] border-b border-[#5a5a5a] text-[8.800px] text-[#eee]">
      <span class="w-[46px]">文件(F)</span><span class="w-[46px]">编辑(E)</span><span class="w-[47px]">视图(V)</span><span class="w-11">插入(I)</span><span class="w-12">格式(O)</span><span class="w-[46px]">工具(T)</span><span class="w-12">绘图(D)</span><span class="w-12">标注(N)</span><span class="w-[50px]">修改(M)</span><span class="w-[46px]">参数(P)</span><span class="w-[49px]">窗口(W)</span><span>帮助(H)</span>
      <svg class="ml-auto mr-0.5 w-8 h-3" viewBox="0 0 32 12" fill="none" stroke="#1c1c1c"><path d="M0 8.500h7" stroke-width="2"/><path d="M11.500 5.500h5v4h-5zM14 5V2.500h5v4h-2M24 3l4.500 5.500M28.500 3 24 8.500" stroke-width="1.500"/></svg>
    </nav>

    <!-- Barra estándar -->
    <div class="flex items-center h-[17.500px] shrink-0 pl-px">
      <div class="w-[5px] h-4 bg-[#4c4c4c] border-x border-[#777]"></div>
      <div class="flex items-center w-[344px] h-4 bg-[#f0f0f0]" data-icons="new open save | print preview publish globe | match block | undo v redo v | props design palette sheet markup calc | help"></div>
      <div class="w-[5px] h-4 ml-0.5 bg-[#4c4c4c] border-x border-[#777]"></div>
      <div class="flex items-center w-[467px] h-4 ml-[.5px] bg-[#f0f0f0]" data-icons="new open save | print preview publish globe | cut copy paste match block | undo v redo v | pan zoom zwin zprev | props design palette sheet markup calc | help"></div>
      <div class="w-[5px] h-4 ml-px bg-[#4c4c4c] border-x border-[#777]"></div>
      <div class="flex items-center flex-1 h-4 bg-[#f0f0f0] overflow-hidden" data-icons="tstyle">
        <div class="flex items-center w-[87px] h-4 ml-0.5 pl-3 order-last bg-[#e1e1e1] border-r border-[#bbb]"><span class="flex-1">Standard</span><svg class="w-1.5 h-1.5 mr-1" viewBox="0 0 6 6" fill="none" stroke="#555"><path d="m.5 1.500 2.500 3 2.500-3"/></svg></div>
        <svg class="size-4 mx-1 order-last shrink-0" fill="none"><use href="#dstyle"/></svg>
        <div class="order-last pl-3 w-10 h-4 leading-4 bg-[#e1e1e1]">ISO-25</div>
      </div>
    </div>

    <!-- Barra de capas y propiedades -->
    <div class="flex items-center h-[18px] mt-[2px] shrink-0 pl-px">
      <div class="w-[5px] h-4 bg-[#4c4c4c] border-x border-[#777]"></div>
      <div class="flex items-center w-[128px] h-4 ml-px pl-1.5 bg-[#e1e1e1]"><span class="flex-1 text-[#111]">AutoCAD 经典</span><svg class="w-1.5 h-1.5 mr-[3px]" viewBox="0 0 6 6" fill="none" stroke="#555"><path d="m.5 1.500 2.500 3 2.500-3"/></svg></div>
      <div class="flex items-center w-[34px] h-4 bg-[#f0f0f0]" data-icons="gear wsave"></div>
      <div class="w-[5px] h-4 ml-px bg-[#4c4c4c] border-x border-[#777]"></div>
      <div class="flex items-center w-[18px] h-4 bg-[#f0f0f0]" data-icons="layers"></div>
      <div class="flex items-center w-[218.500px] h-4 pl-0.5 bg-[#e1e1e1]">
        <svg class="size-3" fill="none"><use href="#bulb"/></svg><svg class="size-3" fill="none"><use href="#sun"/></svg><svg class="size-3" fill="none"><use href="#vpfreeze"/></svg><svg class="size-3 ml-px" fill="none"><use href="#lock"/></svg>
        <span class="size-2 bg-white border border-[#222] ml-px"></span><span class="flex-1 ml-[3px] text-[#111]">0</span><svg class="w-1.5 h-1.5 mr-[3px]" viewBox="0 0 6 6" fill="none" stroke="#555"><path d="m.5 1.500 2.500 3 2.500-3"/></svg>
      </div>
      <div class="flex items-center w-[51px] h-4 bg-[#f0f0f0]" data-icons="lay1 lay2 lay3"></div>
      <div class="w-[5px] h-4 ml-0.5 bg-[#4c4c4c] border-x border-[#777]"></div>
      <div class="flex items-center h-4 ml-[.5px] bg-[#e1e1e1] font-['Liberation_Serif',serif] font-bold text-[8.600px] text-[#222]">
        <div class="flex items-center w-[111px] pl-1"><span class="size-2 bg-white border border-[#222]"></span><span class="flex-1 ml-0.5">ByLayer</span><svg class="w-1.5 h-1.5 mr-1" viewBox="0 0 6 6" fill="none" stroke="#555"><path d="m.5 1.500 2.500 3 2.500-3"/></svg></div>
        <div class="w-1 h-4 bg-[#f4f4f4] border-x border-[#aaa]"></div>
        <div class="flex items-center w-[117px] pl-[3px]"><span class="w-11 h-px bg-[#333]"></span><span class="flex-1 ml-[3px]">ByLayer</span><svg class="w-1.5 h-1.5 mr-1" viewBox="0 0 6 6" fill="none" stroke="#555"><path d="m.5 1.500 2.500 3 2.500-3"/></svg></div>
        <div class="w-1 h-4 bg-[#f4f4f4] border-x border-[#aaa]"></div>
        <div class="flex items-center w-[91px] pl-[3px]"><span class="w-[26px] h-px bg-[#333]"></span><span class="flex-1 ml-[3px]">ByLayer</span><svg class="w-1.5 h-1.5 mr-1" viewBox="0 0 6 6" fill="none" stroke="#555"><path d="m.5 1.500 2.500 3 2.500-3"/></svg></div>
        <div class="w-1 h-4 bg-[#f4f4f4] border-x border-[#aaa]"></div>
        <div class="flex items-center w-[87px] h-4 pl-1.5 bg-[#c9c9c9] border border-[#e1e1e1] font-normal text-[7.200px] text-[#777]"><span class="flex-1">BYCOLOR</span><svg class="w-1.5 h-1.5 mr-px" viewBox="0 0 6 6" fill="none" stroke="#aaa"><path d="m.5 1.500 2.500 3 2.500-3"/></svg></div>
      </div>
    </div>

    <!-- Área de trabajo -->
    <main class="flex h-[400px] mt-px shrink-0">
      <div class="w-[18px] ml-px mt-[3px] shrink-0">
        <div class="h-[5px] w-[17px] bg-[#4c4c4c] border-y border-[#777]"></div>
        <div class="flex flex-col w-[17px] h-[322px] bg-[#f0f0f0]" data-vicons="line xline pline polygon rect arc circle cloud spline ellipse earc insert mkblock point hatch grad region table mtext addsel"></div>
      </div>

      <div class="flex flex-col w-[957px] h-[399px] ml-[2px] border-2 border-t-[#999] border-l-[#8c8c8c] border-r-[#ccc] border-b-[#bbb] shrink-0">
        <div class="flex flex-1">
          <div class="relative w-[940px] h-[384px] bg-black overflow-hidden">
            <svg id="grid" class="absolute inset-0 w-[940px] h-[384px]" viewBox="23 74 940 384" shape-rendering="crispEdges"></svg>
            <svg class="absolute inset-0 w-[940px] h-[384px]" viewBox="23 74 940 384" fill="none">
              <path d="M33.500 412v32M37 448h32M30.500 444.500h6v6h-6zM33.500 444v4h4M73 437.500l9.500 9M82.500 437.500l-9.500 9M34.500 399l4.500 5 4.500-5M39 404v4.500" stroke="#c4c4c4"/>
              <path d="M326 231.500h7V252M303.500 244v8" stroke="#aaa"/><path d="M313 246.500h9M318.500 243v8" stroke="#888"/>
              <circle cx="918" cy="118.500" r="29.500" stroke="#2e2e2e" stroke-width="6.500"/>
              <path d="M904.500 105.500h27v26.500h-27z" fill="#a9abad" stroke="#bbb"/><path d="M909 110h18v17h-18z" fill="#b1b8c0"/>
              <rect x="937" y="197.500" width="23" height="155.500" rx="2" fill="#454545"/>
              <g stroke="#292929"><circle cx="956" cy="201.500" r="2"/><circle cx="948.500" cy="219.500" r="8"/><circle cx="948.500" cy="219.500" r="4.500"/><path d="m945 258-4-7 1.500-.5 3.500 3-1-9 2-.5 1.500 7v-7.500h2l.5 7.500 2-6.500 1.500.5-1 8 2-3 1.500.5-4.500 8.500zM941 264l11 12M952 264l-11 12M940 264h3M940 267v-3M953 264h-3M953 267v-3"/><circle cx="952" cy="273.500" r="3.500"/><path d="m955 276 3 4" stroke-width="2"/><path d="M948.500 290v18M941 299h14M945 294l3.500-4 3.500 4M945 304l3.500 4 3.500-4M944 296l-4 3 4 3"/><ellipse cx="948.500" cy="299" rx="7.500" ry="3.500"/><path d="M940.500 321.500h4v4h-4zM946.500 321.500h4v4h-4zM952.500 321.500h4v4h-4zM940.500 328.500h12v9h-12z"/><path d="m945 330 4 3-4 3z" fill="#292929"/><circle cx="956" cy="348.500" r="2"/></g>
              <path d="M947.500 234h3l-1.500 2zM947.500 285h3l-1.500 2zM947.500 313h3l-1.500 2z" fill="#222"/>
            </svg>
            <div class="absolute left-[3px] top-[5px] text-[9.100px] text-[#d8d8d8]">[−] [俯视] [二维线框]</div>
            <div class="absolute left-[889px] top-[9px] text-[11px] text-[#aaa]">北</div>
            <div class="absolute left-[889px] top-[70px] text-[11px] text-[#aaa]">南</div>
            <div class="absolute left-[859px] top-[39px] text-[11px] text-[#aaa]">西</div>
            <div class="absolute left-[920px] top-[39px] text-[11px] text-[#aaa]">东</div>
            <div class="absolute left-[886px] top-[35px] text-[18px] text-[#4a4f56]">上</div>
            <div class="absolute left-[877px] top-[92px] flex items-center w-[35px] h-[12px] pl-[3px] rounded-[3px] bg-[#8f92a0] border border-[#aaadb8] text-[8px] text-[#444]">WCS<span class="ml-[3px] text-[5px] text-[#aaadb8]">▽</span></div>

            <!-- Barra UCS -->
            <div class="absolute left-[51px] top-[153px] flex w-[252px] h-[17px] bg-[#5c5c5c] pl-[5px]">
              <div class="flex items-center w-[241px] h-4 mt-px pl-[.5px] bg-[#f0f0f0]" data-icons="ucs | uworld uprev | uface uobj uview | uorg uz u3 | urx ury urz | uapply"></div>
              <span class="text-[7px] text-white pl-px leading-[9px]">x</span>
            </div>

            <!-- Descripción emergente -->
            <div class="absolute left-[91px] top-[177px] w-[258px] h-[144px] bg-[#f1f2f8] border border-[#8a8a8a] text-[#555] text-[8.800px]">
              <div class="px-[5px] pt-[7px] h-[104px] border-b border-[#c9c9cc]">
                <p class="font-bold">世界</p>
                <p class="mt-2">将当前用户坐标系设置为世界坐标系</p>
                <div class="mt-[14.500px] leading-[12.600px]">
                  <p class="[word-spacing:1.100px]">WCS 为固定的笛卡尔坐标系统。所有对象均由其 WCS 坐标定</p>
                  <p class="[word-spacing:.9px]">义，而且 WCS 和 UCS 在新图形中是重合的。但是，基于 UCS</p>
                  <p>通常可更加方便地创建和编辑对象，可以进行自定义以满足您的</p>
                  <p>绘图和建模需求。</p>
                </div>
              </div>
              <div class="flex items-center gap-1 pl-[5px] mt-[5px] font-bold text-[#444]">
                <svg class="w-3 h-3" viewBox="0 0 12 12"><path d="M0 0h11v10H0z" fill="#f4f0a0" stroke="#777"/><path d="M0 0h11v2H0z" fill="#3a58c8"/><path d="M2 7h10v4H2z" fill="#111"/></svg>UCS
              </div>
              <p class="pl-[5px] mt-[7px] font-bold">按 F1 键获得更多帮助</p>
            </div>
          </div>
          <div class="flex flex-col items-center w-[13px] bg-[#f0f0f0]">
            <svg class="w-2 h-2 mt-[3px]" viewBox="0 0 8 8" fill="none" stroke="#444" stroke-width="1.500"><path d="m1 6 3-3.500L7 6"/></svg>
            <div class="w-[11px] h-3 mt-0.5 bg-[#cdcdcd]"></div>
            <svg class="w-2 h-2 mt-auto mb-0.5" viewBox="0 0 8 8" fill="none" stroke="#444" stroke-width="1.500"><path d="m1 2 3 3.500L7 2"/></svg>
          </div>
        </div>
        <!-- Pestañas de presentación -->
        <div class="flex items-center h-[11px] bg-[#f0f0f0] text-[8.800px] text-[#222]">
          <svg class="w-[142px] h-[11px] shrink-0" viewBox="0 0 142 11"><path d="M.5 0v11M10.500 0v11M20.500 0v11M31.500 0v11M41.500 0v11" stroke="#aaa"/><path d="M3 2.500v6h1v-6zM8 2.500v6l-3.500-3zM17.500 2.500v6l-3.500-3zM24 2.500v6l3.500-3zM34 2.500v6l3.500-3zM38 2.500v6h1v-6z" fill="#777"/><path d="M42 0h31l-5 11H47z" fill="#000"/><path d="m73 0-5 11M107.500 0l-4 11M141.500 0l-4 11" stroke="#333"/><g font-size="8.800"><text x="49" y="9" fill="#eee" font-weight="bold">模型</text><text x="78" y="9" fill="#222">布局1</text><text x="111.500" y="9" fill="#222">布局2</text></g></svg>
          <div class="w-1 h-[11px] ml-[478px] bg-[#c4c4c4]"></div>
          <svg class="w-2 h-2 ml-[3px]" viewBox="0 0 8 8" fill="none" stroke="#444" stroke-width="1.500"><path d="M5.500 1 2.500 4l3 3"/></svg>
          <div class="w-3 h-[9px] ml-[280px] bg-[#cdcdcd]"></div>
          <svg class="w-2 h-2 ml-[3px]" viewBox="0 0 8 8" fill="none" stroke="#444" stroke-width="1.500"><path d="m2.500 1 3 3-3 3"/></svg>
        </div>
      </div>

      <div class="w-[18px] mt-[2px] ml-[2.500px] h-[397px] overflow-hidden shrink-0">
        <div class="h-[5px] w-[17px] bg-[#4c4c4c] border-y border-[#777]"></div>
        <div class="flex flex-col w-[17px] h-[291px] pt-px bg-[#f0f0f0]" data-vicons="erase cp mirror offset array move rotate scale stretch trim extend break1 break2 join chamfer fillet blend explode"></div>
        <div class="h-[5px] w-[17px] mt-px bg-[#4c4c4c] border-y border-[#777]"></div>
        <div class="flex flex-col w-[17px] h-24 bg-[#f0f0f0]" data-vicons="do1 do2 do3 do4 | abc hback"></div>
      </div>
    </main>

    <!-- Línea de comandos -->
    <section class="flex h-[42.500px] mt-[2.500px] shrink-0 font-['Liberation_Mono','Noto_Sans_CJK_SC',monospace] text-[8.550px] text-[#222]">
      <div class="w-3 bg-[#a2a2a2] pt-1 pl-px"><div class="w-[9px] h-[3px] border-y border-[#666]"></div></div>
      <div class="flex-1">
        <div class="h-[30px] pl-px bg-[#c8c8c8] border-b border-[#aaa]">
          <p class="h-[11.500px] leading-[12px]" data-cmd>指定 UCS 的原点或 [面(F)/命名(NA)/对象(OB)/上一个(P)/视图(V)/世界(W)/X/Y/Z/Z 轴(ZA)] &lt;世界&gt;: _w</p>
          <p class="h-[11.500px] leading-[12px]" data-cmd>命令: 指定对角点或 [栏选(F)/圈围(WP)/圈交(CP)]:</p>
        </div>
        <div class="h-[12.500px] pl-px bg-white leading-[13px]" data-cmd>命令:</div>
      </div>
    </section>

    <!-- Barra de estado -->
    <div class="flex items-center h-[16.500px] shrink-0 border-t border-[#666] bg-linear-to-b from-[#989898] to-[#7c7c7c]">
      <div class="w-[159px] pl-[9px] font-['Liberation_Mono',monospace] text-[7.300px] text-[#1c1c1c]">1935.1749, 1298.5236, 0.0000</div>
      <div class="flex h-4" data-status="s1 s2 s3* s4 s5* s6 s7 s8* s9 s10 s11 s12* s13 s14"></div>
      <div class="w-[375px]"></div>
      <div class="flex items-center h-4 text-[#111]">
        <span class="w-[21px] h-4 pl-0.5 leading-4 text-[8.800px] bg-[#a9a9a9] border-r border-[#666]">模型</span>
        <svg class="w-4 h-4 bg-[#a9a9a9]" fill="none"><use href="#new"/></svg>
        <svg class="w-4 h-4 ml-px bg-[#a9a9a9]" fill="none"><use href="#copy"/></svg>
        <svg class="w-4 h-4 ml-3 bg-[#a9a9a9]" fill="none"><use href="#tri"/></svg>
        <span class="w-[25px] h-4 leading-4 text-[8px] bg-[#a9a9a9]">1:1<span class="ml-1 text-[5px]">▼</span></span>
        <svg class="w-4 h-4 ml-px bg-[#a9a9a9]" fill="none"><use href="#s9"/></svg>
        <svg class="w-4 h-4 ml-px bg-[#a9a9a9]" fill="none"><use href="#tri"/></svg>
        <svg class="w-4 h-4 ml-1 bg-[#a9a9a9]" fill="none"><use href="#gear"/></svg>
        <svg class="w-4 h-4 ml-px bg-[#a9a9a9]" fill="none"><use href="#lock"/></svg>
        <svg class="w-4 h-4 bg-[#a9a9a9]" fill="none"><use href="#props"/></svg>
        <span class="flex justify-center items-center w-[22px] h-4 bg-[#b4b4b4] border-r border-[#666]"><svg class="size-3.5" fill="none"><use href="#bulb"/></svg></span>
        <span class="w-3 text-center text-[5px]">▼</span>
        <svg class="w-4 h-4 ml-px bg-[#a9a9a9]" fill="none"><use href="#win"/></svg>
      </div>
    </div>

    <!-- Barra de tareas -->
    <footer class="flex items-center flex-1 bg-[#04171c] text-[#eee]">
      <div class="w-[35px] flex justify-center"><svg class="size-3" viewBox="0 0 12 12" fill="#fff"><path d="M0 1.800 5 1v4.600H0zM5.700.9 12 0v5.600H5.700zM0 6.400h5V11l-5-.8zM5.700 6.400H12V12l-6.300-.9z"/></svg></div>
      <div class="flex items-center w-[252px] h-full pl-[7px] bg-[#f2f2f2] text-[10.200px] text-[#444]">
        <span class="size-[15px] rounded-full border-2 border-black"></span><span class="ml-[7px] flex-1">在这里输入你要搜索的内容</span>
        <svg class="w-2.5 h-3 mr-2.5" viewBox="0 0 10 12" fill="none" stroke="#444"><rect x="3" y=".5" width="4" height="7" rx="2"/><path d="M1.500 5v1c0 4 7 4 7 0V5M5 9v2.500"/></svg>
      </div>
      <div class="flex flex-col items-center justify-end w-[35px] h-full ml-0.5 bg-[#3a4548]"><svg class="w-[17px] h-[17px] mb-[5px]" viewBox="0 0 17 17"><path d="M1 1h15v15H1z" fill="#777"/><path d="M1 9h15v7H1z" fill="#ddd"/><path d="m1 12 3-11 3 1 6 8-4 1-1-1-4 1-1 2z" fill="#d4141c"/><path d="m6 5 2 3-3 1z" fill="#5a0a0e"/><path d="m8 15 8-6v7z" fill="#333"/></svg><span class="w-[35px] h-px bg-[#8fd6dd]"></span></div>
      <div class="flex flex-col items-center justify-end w-[30px] h-full ml-1"><svg class="size-4 mb-1.5" viewBox="0 0 16 16"><path d="M1 7C2 2 5 .5 8.500.5 13 .5 15.500 4 15.200 9H5.500c.3 4.500 5 4.500 9 2.700v3C9 17 2.500 16 2.500 10 2.500 7 4.500 5.500 6 5c-.4.7-.6 1.300-.6 2h5.400C10.800 2.500 4 2.500 1 7z" fill="#0f80dc"/></svg><span class="w-[30px] h-px bg-[#8fd6dd]"></span></div>
      <div class="flex flex-col items-center justify-end w-[30px] h-full ml-[5px]"><svg class="size-[18px] mb-1" viewBox="0 0 18 18"><ellipse cx="8" cy="10" rx="7.500" ry="6.500" fill="#c9e2f0" stroke="#6a96b4"/><circle cx="4.500" cy="8" r="1.500" fill="#d84a34"/><circle cx="8" cy="6" r="1.500" fill="#e8b63a"/><circle cx="4.500" cy="12" r="1.500" fill="#4c9a44"/><circle cx="9" cy="13" r="1.500" fill="#3a66b8"/><path d="m9 14 5-12 2-1 1 2-5 9z" fill="#e28a34" stroke="#8a4c14" stroke-width=".6"/></svg><span class="w-[30px] h-px bg-[#8fd6dd]"></span></div>
      <div class="flex flex-col items-center justify-end w-[30px] h-full ml-1.5"><svg class="w-[17px] h-[17px] mb-[5px]" viewBox="0 0 17 17" fill="#fff"><path d="M0 7h17v10H0zM0 3l3-.5 2 2.500-5 .7zM5 2l3-.4 2 2.600-3 .5zM10 1.400l3-.5 2 2.700-3 .4zM15 .6l2-.3v3z"/></svg><span class="w-[30px] h-px bg-[#8fd6dd]"></span></div>
      <svg class="w-[92px] h-4 ml-auto shrink-0" viewBox="0 0 92 16" fill="none" stroke="#e4e4e4"><path d="m2 10 4-4 4 4"/><path d="M20.500 6.500h8v4h-8z" fill="#ddd"/><path d="M18 4v4h3V4M29.500 7.500v2"/><path d="M37 12c0-5 3-8 8-9M40 12c0-3 2-5 5-6M42.500 12c0-1.500 1-2.500 2.500-3" stroke="#aaa"/><path d="M53 6.500h2l3-3v9l-3-3h-2zM60 6c1 1.500 1 3 0 4M62.500 4.500c2 2 2 5 0 7M65 3c3 3 3 7 0 10"/><rect x="75.500" y="2.500" width="11" height="11" rx="1.500" fill="#2ba83a" stroke="none" transform="rotate(-8 81 8)"/><path d="M84 5.500h-4c-2 0-2 2.500 0 2.500h2c2 0 2 2.500 0 2.500h-4" stroke="#fff" stroke-width="1.500"/></svg>
      <div class="w-[48px] ml-[5px] pb-0.5 text-center text-[8.500px] leading-[14px]"><p>21:13</p><p>2019/1/2</p></div>
      <div class="w-px h-full ml-[3px] mr-0.5 bg-[#455]"></div>
    </footer>

    <!-- Botón de la aplicación -->
    <div class="absolute left-0 top-0 flex items-center w-[30px] h-[29px] bg-linear-to-b from-[#aaa] to-[#6c6c6c] border border-[#555]">
      <svg class="w-[28px] h-[27px]" viewBox="0 0 28 27"><path d="M3 25 8.500 3l5 1L19 20l-5 2-1.500-4-5 1-1 5z" fill="#d01c22"/><path d="m8.500 3 5 1L19 20l-3 1z" fill="#f04a44"/><path d="m10 10 1.500 4.500-3 1z" fill="#8b8b8b"/><path d="M3 25 5 17l3 4-1.500 3z" fill="#8c0f14"/><path d="M21 13h5l-2.500 3z" fill="#222"/></svg>
    </div>

    <!-- Flecha -->
    <svg class="absolute inset-0 w-[1000px] h-[562px]" viewBox="0 0 1000 562" fill="none" stroke="#850a1c" stroke-width="3.600" stroke-linecap="round" stroke-linejoin="round"><path d="M613 10.500 122 229M134.500 202 122 229l40.500-8.500"/></svg>

    <!-- Marca de agua -->
    <svg class="absolute left-[760px] top-[450px] w-[200px] h-[95px]" viewBox="760 450 200 95" fill="#fff" font-family="'Liberation Sans','Noto Sans CJK SC',sans-serif">
      <g opacity=".85" stroke="#b5b5b5" stroke-width=".6">
        <ellipse cx="835.500" cy="477" rx="6.500" ry="8.500"/><ellipse cx="848" cy="465" rx="6.500" ry="8.500"/><ellipse cx="864" cy="466" rx="6.500" ry="8.500"/><ellipse cx="874" cy="481" rx="6.500" ry="8.500"/>
        <path d="M854 478c7 0 9 8 15 13 8 5 10 19-3 20-5 1-18 1-24 0-13-2-11-15-3-20 6-5 8-13 15-13z"/>
        <text x="767" y="511" font-size="41" font-weight="bold" textLength="60" lengthAdjust="spacingAndGlyphs">Bai</text>
        <text x="883" y="507" font-size="29" font-weight="bold" textLength="59" lengthAdjust="spacingAndGlyphs">经验</text>
      </g>
      <text x="839" y="506" font-size="25" font-weight="bold" fill="#bcbcbc" textLength="30" lengthAdjust="spacingAndGlyphs">du</text>
      <text x="767" y="534" font-size="19.500" opacity=".85" stroke="#fff" stroke-width=".3" textLength="178" lengthAdjust="spacingAndGlyphs">jingyan.baidu.com</text>
    </svg>
  </div>

  <script>
    const icon = (name, cls) => `<svg class="${cls}" fill="none"><use href="#${name}"/></svg>`;

    // Barras horizontales
    document.querySelectorAll('[data-icons]').forEach((bar) => {
      const title = bar.closest('header');
      const html = bar.dataset.icons.split(' ').map((name) => {
        if (name === '|') return '<span class="w-1 h-3.5 shrink-0 flex justify-center"><span class="w-px h-3.5 bg-[#999]"></span></span>';
        if (name === 'v') return '<span class="w-[9px] shrink-0 text-center text-[4px] text-[#444]">▼</span>';
        const bg = name === 'uworld' ? ' bg-[#cfe5f5]' : '';
        return `<span class="${title ? 'w-[17.500px]' : 'w-[17px]'} h-4 shrink-0 flex items-center justify-center${bg}">${icon(name, 'size-4')}</span>`;
      }).join('');
      bar.insertAdjacentHTML('afterbegin', html);
    });

    // Barras verticales
    document.querySelectorAll('[data-vicons]').forEach((bar) => {
      bar.innerHTML = bar.dataset.vicons.split(' ').map((name) =>
        name === '|' ? '<span class="h-1 w-[15px] mx-px border-b border-[#999]"></span>'
          : `<span class="h-[16.100px] w-[17px] shrink-0 flex items-center justify-center">${icon(name, 'size-4')}</span>`
      ).join('');
    });

    // Botones de estado, * = activo
    document.querySelectorAll('[data-status]').forEach((bar) => {
      bar.innerHTML = bar.dataset.status.split(' ').map((name) => {
        const bg = name.endsWith('*') ? 'bg-[#b4dbe6]' : 'bg-[#a6a6a6]';
        return `<span class="w-[16.100px] h-4 flex items-center justify-center border-r border-[#6c6c6c] ${bg}">${icon(name.replace('*', ''), 'size-4 shrink-0')}</span>`;
      }).join('');
    });

    // Los caracteres chinos ocupan dos celdas en la línea de comandos
    document.querySelectorAll('[data-cmd]').forEach((line) => {
      line.innerHTML = line.innerHTML.replace(/[\u4e00-\u9fff]+/g, '<span class="text-[10.200px]">$&</span>');
    });

    // Rejilla del dibujo
    const grid = document.getElementById('grid');
    const step = 44.85 / 5;
    let minor = '', major = '';
    for (let i = -5; i < 105; i++) {
      const x = Math.round(60.8 + i * step);
      const y = Math.round(120 + i * step);
      const d = `M${x}.5 74v385` + (y < 459 ? `M23 ${y}.5h940` : '');
      if (i % 5 === 0) major += d; else minor += d;
    }
    grid.innerHTML = `<path d="${minor}" stroke="#111116"/><path d="${major}" stroke="#1d1d2b"/>`;
  </script>
</body>
</html>
